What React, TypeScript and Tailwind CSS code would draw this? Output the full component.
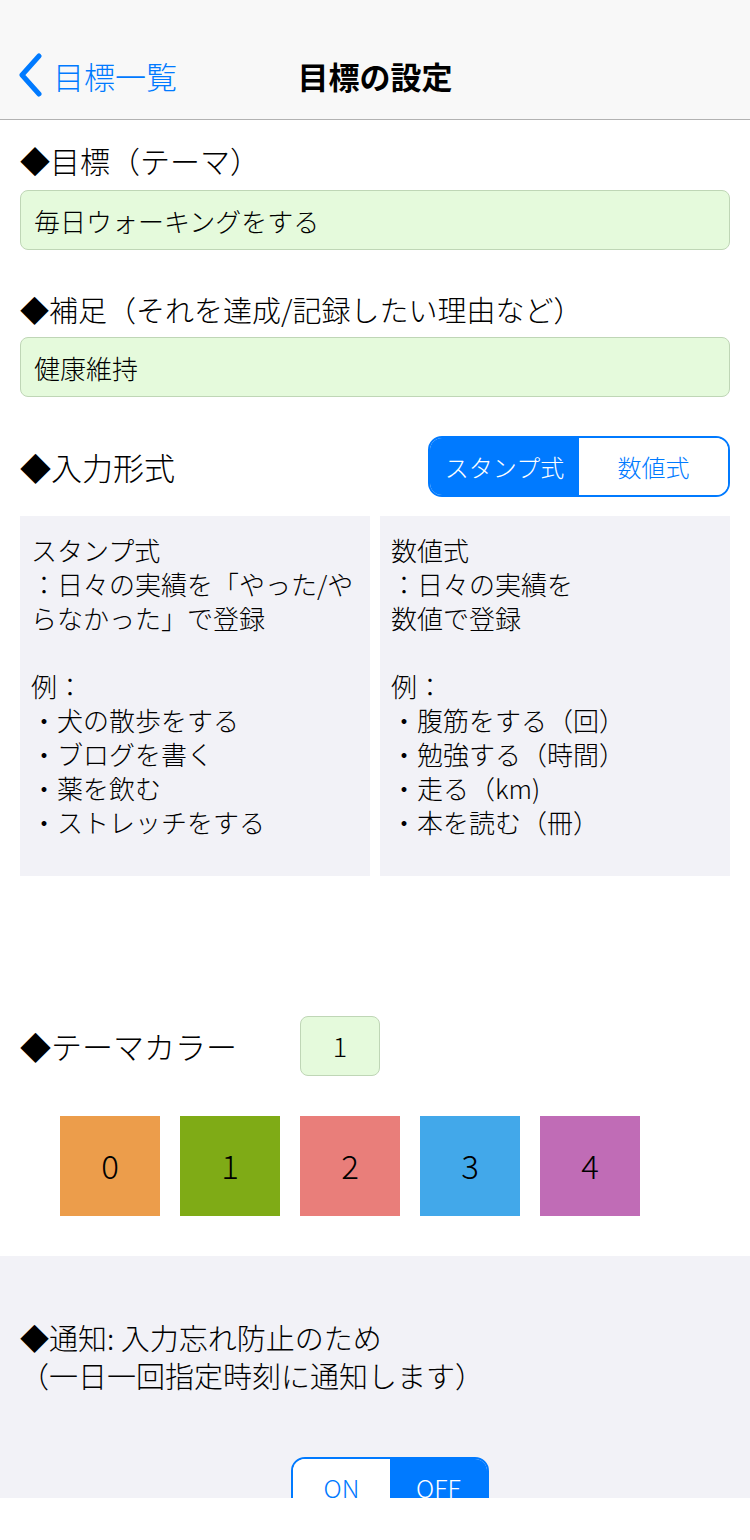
import React, { useState } from "react";

const swatches = [
  { id: 0, color: "bg-[#ec9d4b]" },
  { id: 1, color: "bg-[#7fab16]" },
  { id: 2, color: "bg-[#e97e7a]" },
  { id: 3, color: "bg-[#42a8ea]" },
  { id: 4, color: "bg-[#c06cb6]" },
];

function ExampleBox({ title, lines, examples }: { title: string; lines: string[]; examples: string[] }) {
  return (
    <div className="h-[360px] bg-[#f2f2f7] pl-[11px] pr-2 pt-[17px] text-[26px] leading-[34px] text-black">
      <p>{title}</p>
      {lines.map((l) => (
        <p key={l}>{l}</p>
      ))}
      <p>&nbsp;</p>
      <p>例：</p>
      {examples.map((e) => (
        <p key={e}>・{e}</p>
      ))}
    </div>
  );
}

export default function App() {
  const [mode, setMode] = useState<"stamp" | "number">("stamp");
  const [notify, setNotify] = useState(false);
  const [theme] = useState(1);

  return (
    <div
      className="w-[750px] h-[1540px] bg-white overflow-hidden text-black font-light"
      style={{ fontFamily: '"Noto Sans CJK JP", "Noto Sans", sans-serif' }}
    >
      {/* nav bar */}
      <header className="h-[120px] bg-[#f8f8f8] border-b border-[#b2b2b2] pt-[44px]">
        <div className="grid grid-cols-[1fr_auto_1fr] items-center h-[62px]">
          <button className="flex items-center text-[#007aff] text-[31px] pl-[17px]">
            <svg width="28" height="44" viewBox="0 0 28 44" className="mr-[8px]">
              <path d="M22 3 L5 22 L22 41" fill="none" stroke="#007aff" strokeWidth="5" strokeLinecap="round" strokeLinejoin="round" />
            </svg>
            <span className="leading-none">目標一覧</span>
          </button>
          <h1 className="text-[31px] font-bold leading-none">目標の設定</h1>
          <div />
        </div>
      </header>

      <main className="px-5">
        <h2 className="mt-5 text-[30px] leading-[40px]">◆目標（テーマ）</h2>
        <div className="mt-[10px] h-[60px] rounded-lg border border-[#bfd6b6] bg-[#e5fadc] pl-[13px] flex items-center text-[26px]">
          毎日ウォーキングをする
        </div>

        <h2 className="mt-[39px] text-[29px] leading-[40px] whitespace-nowrap">◆補足（それを達成/記録したい理由など）</h2>
        <div className="mt-2 h-[60px] rounded-lg border border-[#bfd6b6] bg-[#e5fadc] pl-[13px] flex items-center text-[26px]">
          健康維持
        </div>

        <div className="mt-[39px] h-[61px] flex items-center justify-between">
          <h2 className="text-[31px] leading-[40px]">◆入力形式</h2>
          <div className="flex w-[302px] h-[61px] rounded-[14px] border-2 border-[#007aff] overflow-hidden text-[24px]">
            <button
              onClick={() => setMode("stamp")}
              className={mode === "stamp" ? "flex-1 bg-[#007aff] text-white" : "flex-1 bg-white text-[#007aff]"}
            >
              スタンプ式
            </button>
            <button
              onClick={() => setMode("number")}
              className={mode === "number" ? "flex-1 bg-[#007aff] text-white" : "flex-1 bg-white text-[#007aff]"}
            >
              数値式
            </button>
          </div>
        </div>

        <div className="mt-[19px] grid grid-cols-2 gap-[10px]">
          <ExampleBox
            title="スタンプ式"
            lines={["：日々の実績を「やった/や", "らなかった」で登録"]}
            examples={["犬の散歩をする", "ブログを書く", "薬を飲む", "ストレッチをする"]}
          />
          <ExampleBox
            title="数値式"
            lines={["：日々の実績を", "数値で登録"]}
            examples={["腹筋をする（回）", "勉強する（時間）", "走る（km)", "本を読む（冊）"]}
          />
        </div>

        <div className="mt-[140px] h-[60px] flex items-center">
          <h2 className="w-[280px] text-[31px] leading-[40px]">◆テーマカラー</h2>
          <div className="w-[80px] h-[60px] rounded-lg border border-[#bfd6b6] bg-[#e5fadc] flex items-center justify-center text-[27px]">
            {theme}
          </div>
        </div>

        <div className="mt-10 pl-10 flex gap-5">
          {swatches.map((s) => (
            <div key={s.id} className={`w-[100px] h-[100px] ${s.color} flex items-center justify-center text-[33px]`}>
              {s.id}
            </div>
          ))}
        </div>
      </main>

      <section className="mt-10 h-[242px] bg-[#f2f2f7] overflow-hidden">
        <div className="pl-5 pt-[62px] text-[29px] leading-[38px]">
          <p>◆通知: 入力忘れ防止のため</p>
          <p>（一日一回指定時刻に通知します）</p>
        </div>
        <div className="mt-[63px] ml-[291px] flex w-[198px] h-[61px] rounded-[14px] border-2 border-[#007aff] overflow-hidden text-[25px]">
          <button
            onClick={() => setNotify(true)}
            className={notify ? "flex-1 bg-[#007aff] text-white" : "flex-1 bg-white text-[#007aff]"}
          >
            ON
          </button>
          <button
            onClick={() => setNotify(false)}
            className={!notify ? "flex-1 bg-[#007aff] text-white" : "flex-1 bg-white text-[#007aff]"}
          >
            OFF
          </button>
        </div>
      </section>
    </div>
  );
}
